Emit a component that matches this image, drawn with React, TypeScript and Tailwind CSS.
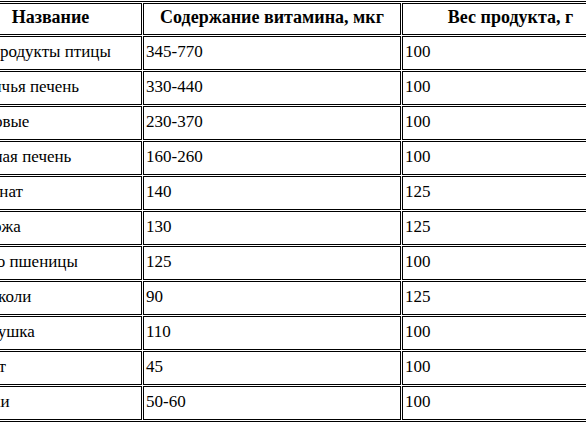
// name, amount, weight, indent of the first column
const rows = [
  ['Субпродукты птицы', '345-770', '100', 'pl-[3px]'],
  ['Телячья печень', '330-440', '100', 'pl-[8px]'],
  ['Бобовые', '230-370', '100', 'pl-[7px]'],
  ['Свиная печень', '160-260', '100', 'pl-[5px]'],
  ['Шпинат', '140', '125', 'pl-[4px]'],
  ['Спаржа', '130', '125', 'pl-[5px]'],
  ['Зерно пшеницы', '125', '100', 'pl-[3px]'],
  ['Брокколи', '90', '125', 'pl-[3px]'],
  ['Петрушка', '110', '100', 'pl-[2px]'],
  ['Салат', '45', '100', 'pl-[4px]'],
  ['Орехи', '50-60', '100', 'pl-[4px]'],
]

export default function App() {
  return (
    <div className="h-[425px] w-[586px] overflow-hidden bg-white pt-px font-['Liberation_Serif',serif] text-black">
      <table className="-ml-[43px] w-[664px] table-fixed border-separate border-spacing-[1px] border border-black font-['Liberation_Serif',serif] text-[17px] leading-[19px]">
        <colgroup>
          <col className="w-[183px]" />
          <col className="w-[258px]" />
          <col className="w-[217px]" />
        </colgroup>
        <thead>
          <tr>
            <th className="h-[32px] border border-black px-[2px] pb-[4px] text-center align-middle text-[18px] font-bold">Название</th>
            <th className="h-[32px] border border-black px-[2px] pb-[4px] text-center align-middle text-[18px] font-bold">Содержание витамина, мкг</th>
            <th className="h-[32px] border border-black px-[2px] pb-[4px] text-center align-middle text-[18px] font-bold">Вес продукта, г</th>
          </tr>
        </thead>
        <tbody>
          {rows.map(([name, amount, weight, indent]) => (
            <tr key={name}>
              <td className={`h-[34px] border border-black pr-[2px] pb-[3px] text-left align-middle ${indent}`}>{name}</td>
              <td className="h-[34px] border border-black px-[2px] pb-[3px] text-left align-middle">{amount}</td>
              <td className="h-[34px] border border-black px-[2px] pb-[3px] text-left align-middle">{weight}</td>
            </tr>
          ))}
        </tbody>
      </table>
    </div>
  )
}
